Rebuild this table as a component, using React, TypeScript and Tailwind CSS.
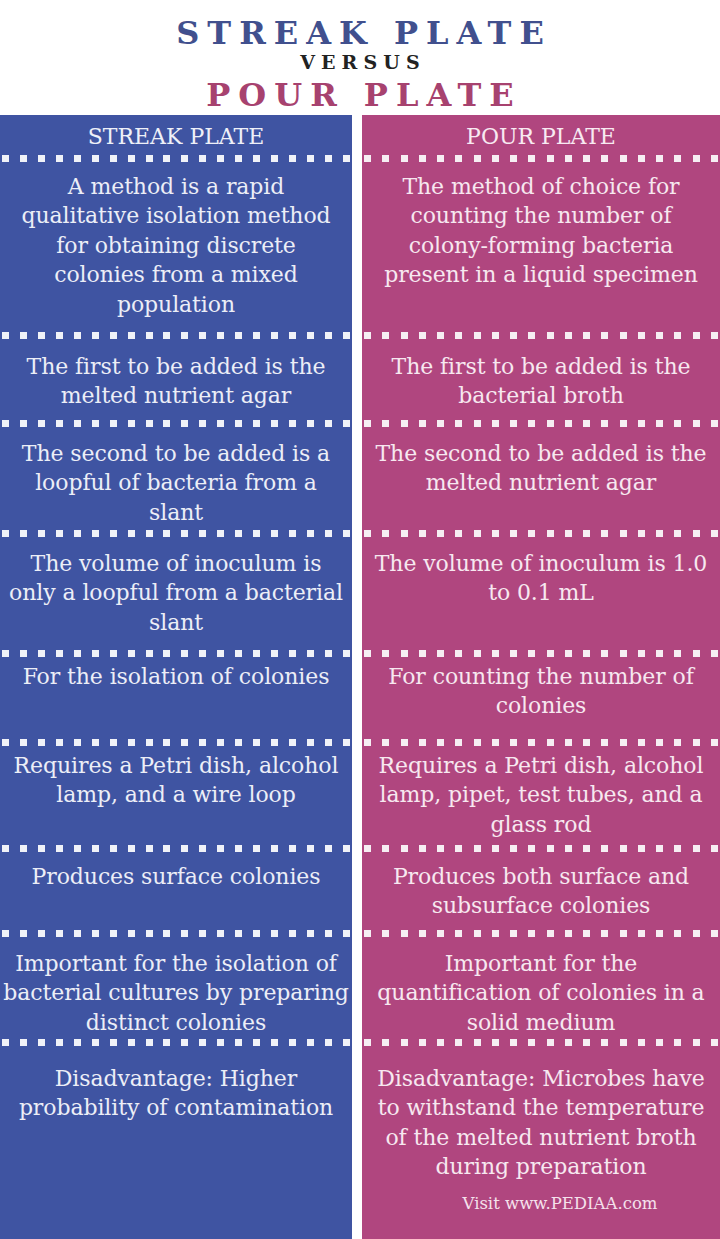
import React from "react"

const BLUE = "bg-[#3f54a2]"
const PINK = "bg-[#b0467f]"

type Row = { left: string[]; right: string[]; h: number; pt: number }

const rows: Row[] = [
  {
    left: ["A method is a rapid", "qualitative isolation method", "for obtaining discrete", "colonies from a mixed", "population"],
    right: ["The method of choice for", "counting the number of", "colony-forming bacteria", "present in a liquid specimen"],
    h: 177,
    pt: 10,
  },
  {
    left: ["The first to be added is the", "melted nutrient agar"],
    right: ["The first to be added is the", "bacterial broth"],
    h: 88,
    pt: 13,
  },
  {
    left: ["The second to be added is a", "loopful of bacteria from a", "slant"],
    right: ["The second to be added is the", "melted nutrient agar"],
    h: 110,
    pt: 12,
  },
  {
    left: ["The volume of inoculum is", "only a loopful from a bacterial", "slant"],
    right: ["The volume of inoculum is 1.0", "to 0.1 mL"],
    h: 120,
    pt: 12,
  },
  {
    left: ["For the isolation of colonies"],
    right: ["For counting the number of", "colonies"],
    h: 89,
    pt: 5,
  },
  {
    left: ["Requires a Petri dish, alcohol", "lamp, and a wire loop"],
    right: ["Requires a Petri dish, alcohol", "lamp, pipet, test tubes, and a", "glass rod"],
    h: 106,
    pt: 5,
  },
  {
    left: ["Produces surface colonies"],
    right: ["Produces both surface and", "subsurface colonies"],
    h: 85,
    pt: 10,
  },
  {
    left: ["Important for the isolation of", "bacterial cultures by preparing", "distinct colonies"],
    right: ["Important for the", "quantification of colonies in a", "solid medium"],
    h: 109,
    pt: 12,
  },
]

function Dots({ pink }: { pink?: boolean }) {
  return (
    <div className="flex h-[7px] justify-between px-[2px]">
      {Array.from({ length: 20 }).map((_, i) => (
        <span key={i} className={`h-[7px] w-[7px] ${pink ? "bg-[#f6eef3]" : "bg-[#f0f2f8]"}`} />
      ))}
    </div>
  )
}

function Cell({
  lines,
  pink,
  h,
  pt,
  children,
}: {
  lines: string[]
  pink?: boolean
  h: number
  pt: number
  children?: React.ReactNode
}) {
  return (
    <div className={`${pink ? PINK : BLUE} flex flex-col`} style={{ height: h }}>
      <Dots pink={pink} />
      <div
        className={`text-center text-[22px] leading-[29.5px] tracking-[-0.1px] whitespace-nowrap ${pink ? "text-[#f7e8f0]" : "text-[#eceef7]"}`}
        style={{ paddingTop: pt }}
      >
        {lines.map((l, i) => (
          <div key={i}>{l}</div>
        ))}
      </div>
      {children}
    </div>
  )
}

export default function App() {
  return (
    <div className="h-[1239px] w-[720px] overflow-hidden bg-white font-['DejaVu_Serif',serif]">
      <div className="flex h-[115px] flex-col items-center">
        <h1 className="mt-[17px] pl-[8px] text-[32px] font-bold leading-[32px] tracking-[8px] text-[#41508e]">
          STREAK PLATE
        </h1>
        <div className="pl-[6px] text-[19px] font-bold leading-[26px] tracking-[0.32em] text-[#222]">VERSUS</div>
        <h2 className="mt-[1px] pl-[8px] text-[32px] font-bold leading-[38px] tracking-[8px] text-[#a7426f]">
          POUR PLATE
        </h2>
      </div>

      <div className="grid grid-cols-[352px_358px] gap-x-[10px]">
        <div className={`${BLUE} flex h-[39.5px] items-center justify-center pt-[4px] text-[22px] text-[#eef0f8]`}>
          STREAK PLATE
        </div>
        <div className={`${PINK} flex h-[39.5px] items-center justify-center pt-[4px] text-[22px] text-[#f8eaf2]`}>
          POUR PLATE
        </div>

        {rows.map((r, i) => (
          <React.Fragment key={i}>
            <Cell lines={r.left} h={r.h} pt={r.pt} />
            <Cell lines={r.right} h={r.h} pt={r.pt} pink />
          </React.Fragment>
        ))}

        <Cell lines={["Disadvantage: Higher", "probability of contamination"]} h={205} pt={18} />
        <Cell
          lines={["Disadvantage: Microbes have", "to withstand the temperature", "of the melted nutrient broth", "during preparation"]}
          h={205}
          pt={18}
          pink
        >
          <div className="mt-[10px] pl-[38px] text-center text-[16.5px] text-[#f5e1ec]">Visit www.PEDIAA.com</div>
        </Cell>
      </div>
    </div>
  )
}
